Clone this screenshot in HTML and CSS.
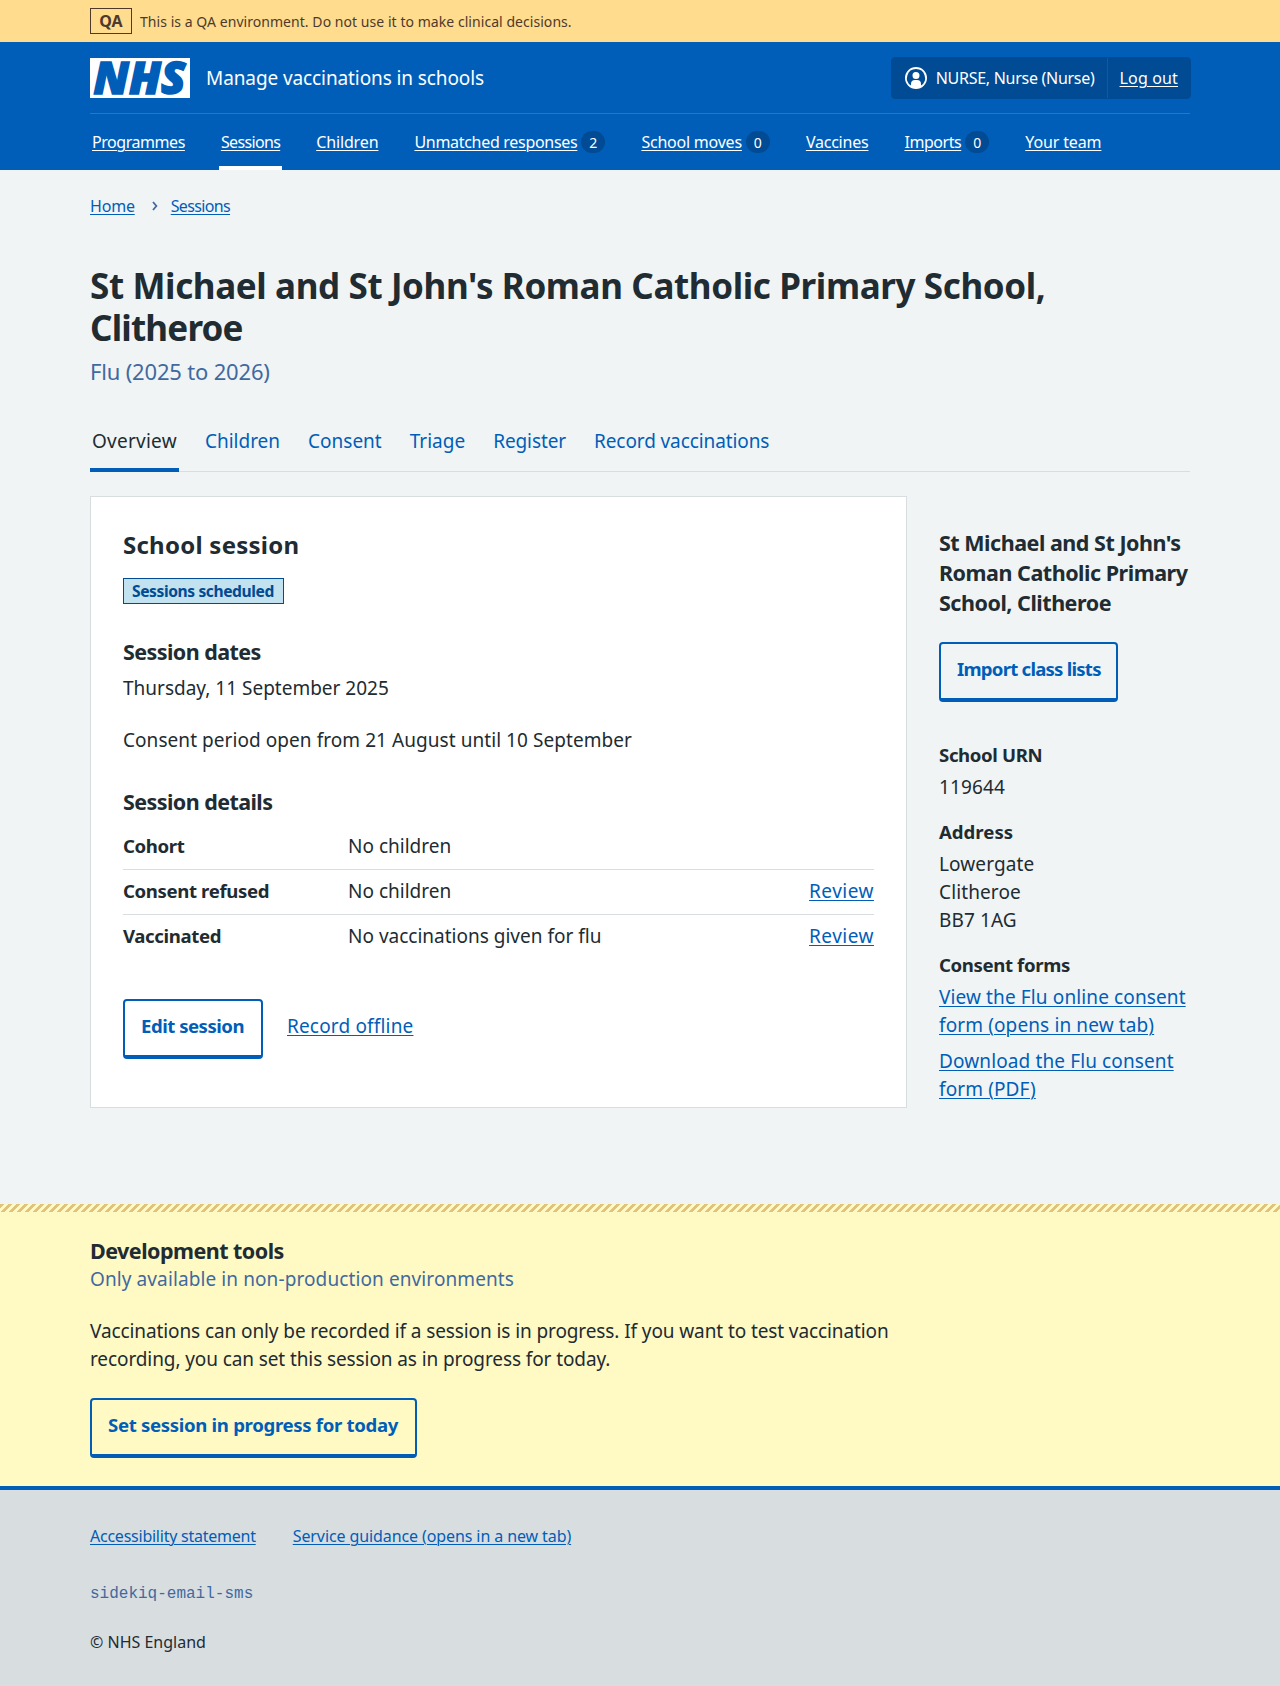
FILE: index.html
```html
<!DOCTYPE html>
<html lang="en">
<head>
<meta charset="utf-8">
<title>St Michael and St John's Roman Catholic Primary School, Clitheroe</title>
<link rel="stylesheet" href="styles.css">
</head>
<body>
<div class="environment">
  <div class="container environment__inner">
    <strong class="environment__tag">QA</strong>
    <span class="environment__text">This is a QA environment. Do not use it to make clinical decisions.</span>
  </div>
</div>

<header class="header">
  <div class="container">
    <div class="header__top">
      <a class="header__service" href="#">
        <svg class="header__logo" viewBox="0 0 200 80" width="100" height="40" role="img" aria-label="NHS">
          <rect width="200" height="80" fill="#fff"/>
          <text class="header__logo-text" x="7" y="71.5" textLength="184" lengthAdjust="spacingAndGlyphs">NHS</text>
        </svg>
        <span class="header__name">Manage vaccinations in schools</span>
      </a>
      <div class="account">
        <span class="account__item account__item--user">
          <svg viewBox="0 0 24 24" width="24" height="24" fill="#fff" aria-hidden="true"><path d="M12 1a11 11 0 1 1 0 22 11 11 0 0 1 0-22Zm0 2a9 9 0 0 0-5 16.5V18a4 4 0 0 1 4-4h2a4 4 0 0 1 4 4v1.5A9 9 0 0 0 12 3Zm0 3a3.5 3.5 0 1 1-3.5 3.5A3.4 3.4 0 0 1 12 6Z"/></svg>
          <span class="account__name">NURSE, Nurse (Nurse)</span>
        </span>
        <span class="account__item"><a class="account__link" href="#">Log out</a></span>
      </div>
    </div>
    <nav class="nav">
      <a class="nav__item" href="#"><span class="nav__label">Programmes</span></a>
      <a class="nav__item nav__item--current" href="#"><span class="nav__label nav__label--tight">Sessions</span></a>
      <a class="nav__item" href="#"><span class="nav__label nav__label--loose">Children</span></a>
      <a class="nav__item" href="#"><span class="nav__label nav__label--long">Unmatched responses</span><span class="nav__count">2</span></a>
      <a class="nav__item" href="#"><span class="nav__label nav__label--moves">School moves</span><span class="nav__count">0</span></a>
      <a class="nav__item" href="#"><span class="nav__label nav__label--moves">Vaccines</span></a>
      <a class="nav__item" href="#"><span class="nav__label">Imports</span><span class="nav__count">0</span></a>
      <a class="nav__item" href="#"><span class="nav__label nav__label--loose">Your team</span></a>
    </nav>
  </div>
</header>

<main class="container main">
  <nav class="breadcrumb">
    <a class="link" href="#">Home</a>
    <svg class="breadcrumb__chevron" viewBox="0 0 6 10" width="6" height="10" aria-hidden="true"><path d="M1 1l3.4 4L1 9" fill="none" stroke="#41699f" stroke-width="1.8"/></svg>
    <a class="link breadcrumb__current" href="#">Sessions</a>
  </nav>

  <h1 class="title">St Michael and St John's Roman Catholic Primary School, <span class="title__town">Clitheroe</span></h1>
  <p class="caption">Flu (2025 to 2026)</p>

  <nav class="tabs">
    <a class="tabs__item tabs__item--current" href="#">Overview</a>
    <a class="tabs__item" href="#">Children</a>
    <a class="tabs__item" href="#">Consent</a>
    <a class="tabs__item" href="#">Triage</a>
    <a class="tabs__item tabs__item--tight" href="#">Register</a>
    <a class="tabs__item tabs__item--tight" href="#">Record vaccinations</a>
  </nav>

  <div class="columns">
    <section class="card">
      <h2 class="card__title">School session</h2>
      <strong class="tag">Sessions scheduled</strong>
      <h3 class="card__heading">Session dates</h3>
      <p class="card__date">Thursday, 11 September 2025</p>
      <p class="card__period">Consent period open from 21 August until 10 September</p>
      <h3 class="card__heading">Session details</h3>
      <dl class="summary">
        <div class="summary__row"><dt>Cohort</dt><dd>No children</dd></div>
        <div class="summary__row"><dt>Consent refused</dt><dd>No children</dd><dd><a class="link summary__action" href="#">Review</a></dd></div>
        <div class="summary__row"><dt>Vaccinated</dt><dd>No vaccinations given for flu</dd><dd><a class="link summary__action" href="#">Review</a></dd></div>
      </dl>
      <div class="card__actions">
        <a class="button button--edit" href="#">Edit session</a>
        <a class="link card__offline" href="#">Record offline</a>
      </div>
    </section>

    <aside class="aside">
      <h3 class="aside__title">St Michael and St John's Roman Catholic Primary School, Clitheroe</h3>
      <a class="button button--import" href="#">Import class lists</a>
      <dl class="facts">
        <dt>School URN</dt>
        <dd>119644</dd>
        <dt class="facts__address">Address</dt>
        <dd>Lowergate<br>Clitheroe<br>BB7 1AG</dd>
        <dt>Consent forms</dt>
        <dd class="facts__links">
          <a class="link" href="#">View the Flu online consent form (opens in new tab)</a>
          <a class="link" href="#">Download the Flu consent form (PDF)</a>
        </dd>
      </dl>
    </aside>
  </div>
</main>

<section class="devtools">
  <div class="container">
    <h3 class="devtools__title">Development tools</h3>
    <p class="devtools__caption">Only available in non-production environments</p>
    <p class="devtools__text">Vaccinations can only be recorded if a session is in progress. If you want to test vaccination recording, you can set this session as in progress for today.</p>
    <a class="button button--progress" href="#">Set session in progress for today</a>
  </div>
</section>

<footer class="footer">
  <div class="container">
    <div class="footer__links">
      <a class="link" href="#">Accessibility statement</a>
      <a class="link" href="#">Service guidance (opens in a new tab)</a>
    </div>
    <p class="footer__release">sidekiq-email-sms</p>
    <p class="footer__copyright">© NHS England</p>
  </div>
</footer>
</body>
</html>
```
FILE: styles.css
```css
* { box-sizing: border-box; }

body {
  margin: 0;
  background: #f0f4f5;
  color: #212b32;
  font: 19px/28px "Noto Sans", sans-serif;
}

h1, h2, h3, p, dl, dd { margin: 0; }

.container { width: 1100px; margin: 0 auto; }

.link { color: #005eb8; text-underline-offset: 2px; text-decoration-thickness: 1px; }

/* Environment banner */
.environment { background: #ffdc8e; color: #4d3a2c; }
.environment__inner { display: flex; align-items: center; gap: 8px; height: 42px; }
.environment__tag {
  width: 42px;
  border: 1px solid #4d3a2c;
  font-size: 16px;
  line-height: 24px;
  text-align: center;
}
.environment__text { padding-top: 2px; font-size: 14px; line-height: 20px; letter-spacing: 0.05px; }

/* Header */
.header { background: #005eb8; color: #fff; }
.header__top {
  display: flex;
  align-items: center;
  justify-content: space-between;
  padding: 15px 0 14px;
  border-bottom: 1px solid #3373bb;
}
.header__service { display: flex; align-items: center; gap: 16px; color: inherit; text-decoration: none; }
.header__logo { display: block; overflow: visible; }
.header__logo-text {
  fill: #005eb8;
  stroke: #005eb8;
  stroke-width: 3px;
  font: italic 800 88px "Open Sans", sans-serif;
}
.header__name { line-height: 28px; letter-spacing: -0.1px; }

.account {
  display: flex;
  margin-right: -1px;
  border: 1px solid #004b93;
  border-radius: 4px;
  background: #004b93;
  font-size: 16px;
  line-height: 24px;
}
.account__item { display: flex; align-items: center; gap: 8px; padding: 8px 12px; }
.account__item--user { border-right: 1px solid #005eb8; }
.account__name { letter-spacing: -0.28px; }
.account__link { color: #fff; text-underline-offset: 2px; text-decoration-thickness: 1px; letter-spacing: 0.15px; }

.nav { display: flex; gap: 32px; font-size: 16px; line-height: 24px; }
.nav__item {
  display: flex;
  align-items: center;
  gap: 4px;
  padding: 16px 2px 12px;
  border-bottom: 4px solid transparent;
  color: #fff;
  text-decoration: none;
}
.nav__item--current { border-bottom-color: #fff; }
.nav__label { text-decoration: underline 1px; text-underline-offset: 2px; letter-spacing: -0.45px; }
.nav__label--tight { letter-spacing: -0.65px; }
.nav__label--long { letter-spacing: -0.3px; }
.nav__label--moves { letter-spacing: -0.22px; }
.nav__label--loose { letter-spacing: -0.13px; }
.nav__count {
  width: 24px;
  height: 22px;
  border-radius: 12px;
  background: #004b93;
  font-size: 14px;
  line-height: 23px;
  text-align: center;
}

/* Page heading */
.main { padding: 24px 0 96px; }
.breadcrumb { display: flex; align-items: center; font-size: 16px; line-height: 24px; letter-spacing: -0.2px; }
.breadcrumb__chevron { margin: 0 13px 0 17px; }
.breadcrumb__current { letter-spacing: -0.65px; }
.title { margin-top: 47px; font-size: 35px; line-height: 42px; letter-spacing: -0.38px; }
.title__town { letter-spacing: -0.8px; }
.caption { margin-top: 7px; color: #41699f; font-size: 22px; line-height: 30px; letter-spacing: -0.18px; }

.tabs { display: flex; gap: 24px; margin-top: 25px; box-shadow: inset 0 -1px #d8dde0; }
.tabs__item {
  padding: 16px 2px 13px;
  border-bottom: 4px solid transparent;
  color: #005eb8;
  text-decoration: none;
}
.tabs__item--current { border-bottom-color: #005eb8; color: #212b32; letter-spacing: 0.25px; }
.tabs__item--tight { letter-spacing: -0.1px; }

/* Session card and school details */
.columns { display: grid; grid-template-columns: 817px 251px; gap: 32px; margin-top: 24px; }
.card { height: 612px; padding: 32px; border: 1px solid #d8dde0; background: #fff; }
.card__title { font-size: 24px; line-height: 32px; letter-spacing: 0.25px; }
.tag {
  display: block;
  width: 161px;
  margin-top: 17px;
  padding: 0 8px;
  border: 1px solid #004b93;
  background: #c2e2ef;
  color: #004b93;
  font-size: 15.6px;
  line-height: 24px;
  letter-spacing: -0.4px;
  white-space: nowrap;
}
.card__heading { margin: 33px 0 -1px; font-size: 21.5px; line-height: 30px; letter-spacing: -0.57px; }
.card__date { margin-top: 8px; }
.card__period { margin-top: 24px; letter-spacing: 0.06px; }

.summary { padding-top: 9px; }
.summary__row { display: grid; grid-template-columns: 225px 1fr auto; padding: 7px 0 9px; border-bottom: 1px solid #d8dde0; }
.summary__row:last-child { border-bottom-color: transparent; }
.summary dt, .facts dt { font-size: 18.6px; font-weight: 700; letter-spacing: -0.37px; }
.summary__action { letter-spacing: 0.5px; }
.card__date { margin-top: 0; padding-top: 8px; }

.card__actions { display: flex; align-items: flex-start; gap: 24px; margin-top: 39px; }
.card__offline { margin-top: 13px; letter-spacing: 0.17px; }
.button {
  display: block;
  width: fit-content;
  padding: 11px 0 15px 16px;
  border: 2px solid #005eb8;
  border-bottom-width: 4px;
  border-radius: 4px;
  color: #005eb8;
  font-size: 18.6px;
  font-weight: 700;
  text-decoration: none;
  white-space: nowrap;
}
.button--edit { width: 140px; letter-spacing: -0.5px; }
.button--import { width: 179px; letter-spacing: -0.77px; }
.button--progress { width: 327px; letter-spacing: -0.32px; }

.aside { padding-top: 32px; }
.aside__title { margin: 0 -8px 24px 0; font-size: 21.5px; line-height: 30px; letter-spacing: -0.48px; }
.facts { margin-top: 39px; }
.facts dd { margin: 4px 0 17px; letter-spacing: 0.12px; }
.facts .facts__address { letter-spacing: 0; }
.facts .facts__links { display: grid; gap: 8px; margin-bottom: 0; }

/* Development tools */
.devtools { padding-bottom: 28px; background: #fff9c4; }
.devtools::before {
  content: "";
  display: block;
  height: 8px;
  margin-bottom: 24px;
  background: linear-gradient(135deg, #e0c47e 25%, transparent 25% 50%, #e0c47e 50% 75%, transparent 75%) 0 0 / 8px 8px;
}
.devtools__title { margin-bottom: -1px; font-size: 21.5px; line-height: 30px; letter-spacing: -0.53px; }
.devtools__caption { color: #41699f; letter-spacing: 0.1px; }
.devtools__text { width: 817px; margin: 24px 0 25px; letter-spacing: -0.1px; }

/* Footer */
.footer { height: 200px; padding-top: 34px; border-top: 4px solid #005eb8; background: #d8dde0; font-size: 16px; line-height: 24px; }
.footer__links { display: flex; gap: 37px; letter-spacing: -0.24px; }
.footer__links .link + .link { letter-spacing: -0.1px; }
.footer__release { margin: 34px 0 24px; color: #41699f; font-family: "Liberation Mono", monospace; }
```
